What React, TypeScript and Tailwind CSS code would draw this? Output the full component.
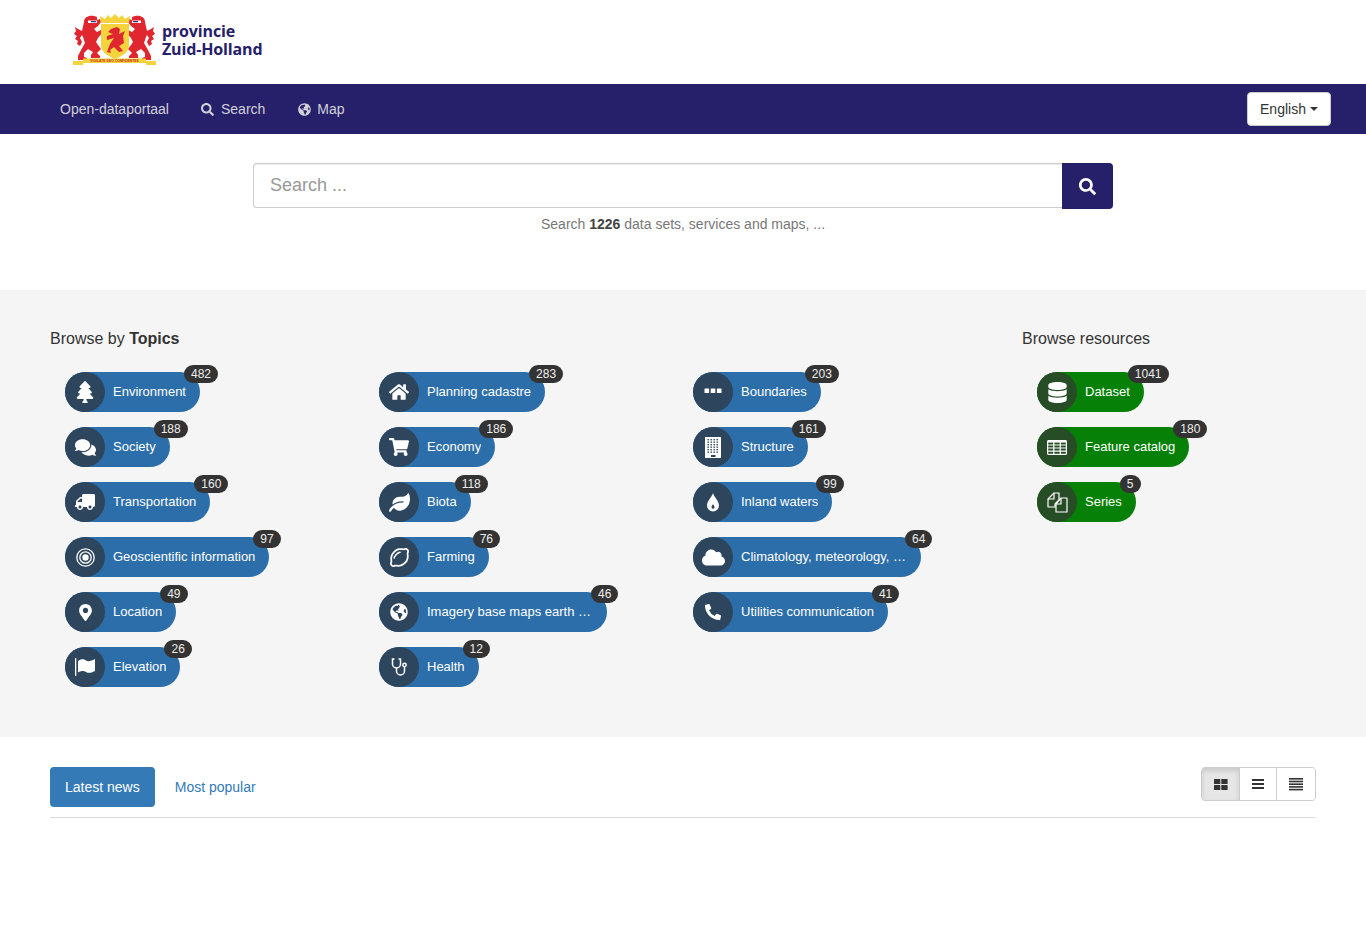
import React from "react";
import {
  FaTree, FaHome, FaComments, FaShoppingCart, FaTruck, FaLeaf, FaRegLemon, FaCloud, FaMapMarkerAlt,
  FaGlobeAmericas, FaPhoneAlt, FaDatabase, FaSearch,
} from "react-icons/fa";

const Dots = () => (
  <svg width="18" height="6" viewBox="0 0 18 6" fill="white" className="-mt-[2px]"><rect x="0.5" y="0.5" width="4.6" height="4.6" rx="0.5" /><rect x="6.7" y="0.5" width="4.6" height="4.6" rx="0.5" /><rect x="12.9" y="0.5" width="4.6" height="4.6" rx="0.5" /></svg>
);
const Building = () => (
  <svg width="16" height="21" viewBox="0 0 16 21">
    <rect width="16" height="21" fill="white" />
    {[2, 5, 8, 11].map((x) => [2, 4.5, 7, 9.5, 12, 14.5].map((y) => <rect key={x + "-" + y} x={x + 0.5} y={y} width="1.4" height="1.4" fill="#2d465e" />))}
    <rect x="6" y="18" width="4.5" height="2" fill="#2d465e" />
  </svg>
);
const Drop = () => (
  <svg width="14" height="19" viewBox="0 0 14 19">
    <path d="M7 0C8 4 13 8 13 12.5A6 6 0 0 1 1 12.5C1 8 6 4 7 0Z" fill="white" />
    <path d="M7 11C7.4 12 8.5 13 8.5 14.2A1.5 1.5 0 0 1 5.5 14.2C5.5 13 6.6 12 7 11Z" fill="#2d465e" />
  </svg>
);
const Target = () => (
  <svg width="19" height="19" viewBox="0 0 19 19" fill="none" stroke="white">
    <circle cx="9.5" cy="9.5" r="8.7" strokeWidth="1.3" />
    <circle cx="9.5" cy="9.5" r="5.7" strokeWidth="1.3" />
    <circle cx="9.5" cy="9.5" r="3.2" fill="white" stroke="none" />
  </svg>
);
const Grid = () => (
  <svg width="20" height="15" viewBox="0 0 20 15" fill="none" stroke="white" strokeWidth="1.2">
    <rect x="0.6" y="0.6" width="18.8" height="13.8" rx="1" />
    <path d="M0.6 5H19.4M0.6 8H19.4M0.6 11.2H19.4M6.8 1V14.4M13.2 1V14.4" />
    <path d="M0.6 1.6H19.4" strokeWidth="2" />
  </svg>
);
const Files = () => (
  <svg width="21" height="21" viewBox="0 0 21 21" fill="none" stroke="white" strokeWidth="1.2" strokeLinejoin="round">
    <path d="M7 1H12V8L8 12V15H1V7Z" />
    <path d="M1 7H7V1" />
    <path d="M9 12L14 6H20V20H9Z" fill="#264d26" />
    <path d="M9 12H14V6" />
  </svg>
);
const Flag = () => (
  <svg width="20" height="18" viewBox="0 0 20 18" fill="white">
    <rect x="0" y="0" width="1.3" height="18" />
    <path d="M3 3C6 0.5 9 1 11 2.5C13.5 3.8 16 3 20 1V13C16 15 13.5 15.5 11 14C9 12.5 6 12.5 3 14.5Z" />
  </svg>
);
const Stetho = () => (
  <svg width="17" height="18" viewBox="0 0 17 18" fill="none" stroke="white" strokeWidth="1.5">
    <path d="M3.5 1H1.5V6A4 4 0 0 0 9.5 6V1H7.5" />
    <path d="M5.5 10V13A4 4 0 0 0 13.5 13V9" />
    <circle cx="13.5" cy="7" r="1.7" />
  </svg>
);

type P = { icon: React.ReactNode; label: string; n: number };
const col1: P[] = [
  { icon: <FaTree size={22} color="white" />, label: "Environment", n: 482 },
  { icon: <FaComments size={21} color="white" />, label: "Society", n: 188 },
  { icon: <FaTruck size={20} color="white" className="-scale-x-100" />, label: "Transportation", n: 160 },
  { icon: <Target />, label: "Geoscientific information", n: 97 },
  { icon: <FaMapMarkerAlt size={17} color="white" />, label: "Location", n: 49 },
  { icon: <Flag />, label: "Elevation", n: 26 },
];
const col2: P[] = [
  { icon: <FaHome size={20} color="white" />, label: "Planning cadastre", n: 283 },
  { icon: <FaShoppingCart size={20} color="white" />, label: "Economy", n: 186 },
  { icon: <FaLeaf size={21} color="white" />, label: "Biota", n: 118 },
  { icon: <FaRegLemon size={19} color="white" />, label: "Farming", n: 76 },
  { icon: <FaGlobeAmericas size={18} color="white" />, label: "Imagery base maps earth cover", n: 46 },
  { icon: <Stetho />, label: "Health", n: 12 },
];
const col3: P[] = [
  { icon: <Dots />, label: "Boundaries", n: 203 },
  { icon: <Building />, label: "Structure", n: 161 },
  { icon: <Drop />, label: "Inland waters", n: 99 },
  { icon: <FaCloud size={23} color="white" />, label: "Climatology, meteorology, atmosphere", n: 64 },
  { icon: <FaPhoneAlt size={16} color="white" />, label: "Utilities communication", n: 41 },
];
const res: P[] = [
  { icon: <FaDatabase size={21} color="white" />, label: "Dataset", n: 1041 },
  { icon: <Grid />, label: "Feature catalog", n: 180 },
  { icon: <Files />, label: "Series", n: 5 },
];

function Pill({ p, green }: { p: P; green?: boolean }) {
  return (
    <div className="mb-[15px] flex h-10">
      <div className={`relative flex h-10 max-w-[228px] items-center rounded-[20px] pl-12 pr-[14px] text-[13px] text-white ${green ? "bg-[#068006]" : "bg-[#2c6ea9]"}`}>
        <span className={`absolute left-0 top-0 flex h-10 w-10 items-center justify-center rounded-full ${green ? "bg-[#264d26]" : "bg-[#2d465e]"}`}>{p.icon}</span>
        <span className="truncate">{p.label}</span>
        <span className="absolute left-[calc(100%-16px)] -top-[7px] h-[18px] rounded-[9px] bg-[#333333] px-[7px] text-[12px] leading-[18px] text-[#eeeeee]">{p.n}</span>
      </div>
    </div>
  );
}

const lion = "M14 14C14 9 19 7 24 8L27 9L27 12L30 11L31 14L28 18L24 21L27 24L31 22L32 25L28 30L26 34L28 37L31 41L27 45L30 48L30 50L21 50L21 47L23 44L18 41L14 45L14 49L17 50L17 52L8 52L8 48L11 42L15 35L13 29L12 27L10 30L12 34L10 38L7 36L8 33L5 31L7 28L4 26L6 23L5 19L8 21L12 23Z";

const Logo = () => (
  <svg width="90" height="60" viewBox="0 0 90 60" className="block">
    <path fill="#e0262e" d={lion} />
    <path fill="#e0262e" transform="translate(89 0) scale(-1 1)" d={lion} />
    <path fill="white" d="M18 12.5H27V15H18ZM62 12.5H71V15H62Z" />
    <path fill="#2b3a8c" d="M21 13H26V14.3H21ZM63 13H68V14.3H63Z" />
    <path fill="#f4d33c" d="M31 16H59V37C59 45 50 49 45 51C40 49 31 45 31 37Z" />
    <path fill="#f4d33c" d="M31 15L30 8L35 11L38 7L41 10L45 6L49 10L52 7L55 11L60 8L59 15Z" />
    <path fill="#e0262e" d="M41 21L47 19L50 21L49 26L55 23L53 28L54 35L49 38L53 43L49 44L44 39L40 42L41 45L37 44L40 36L44 30L37 32L37 28L43 26L38 24Z" />
    <path fill="#f4d33c" d="M3 53H13V50.5H76V53H86V57H76V55H13V57H3Z" />
    <text x="44.5" y="54.2" textAnchor="middle" fontSize="3.2" fontWeight="700" fill="#c8281e" fontFamily="'Liberation Sans',sans-serif" letterSpacing="0.1">VIGILATE DEO CONFIDENTES</text>
  </svg>
);

export default function App() {
  return (
    <div className="min-h-[932px] bg-white font-['Liberation_Sans',Arial,sans-serif] text-[14px] text-[#333333]">
      <header className="flex h-[84px] items-start pl-[70px] pt-[8px]">
        <Logo />
        <div className="ml-[2px] mt-[14px] font-['Open_Sans',sans-serif] text-[16px] font-bold leading-[18px] tracking-[-0.15px] text-[#26206a]">
          <div>provincie</div>
          <div>Zuid-Holland</div>
        </div>
      </header>

      <nav className="flex h-[50px] items-center justify-between bg-[#26206a] pl-[60px] pr-[35px] text-[#d0d0d8]">
        <div className="flex items-center">
          <span>Open-dataportaal</span>
          <span className="ml-8 flex items-center"><FaSearch size={13} className="mr-[7px]" />Search</span>
          <span className="ml-[33px] flex items-center"><FaGlobeAmericas size={13} className="mr-[6px]" />Map</span>
        </div>
        <button className="flex h-[34px] w-[84px] items-center justify-center rounded border border-[#cccccc] bg-white text-[14px] text-[#333333]">
          English
          <span className="ml-1 h-0 w-0 border-x-4 border-t-4 border-x-transparent border-t-[#333333]" />
        </button>
      </nav>

      <section className="h-[156px] pt-[29px]">
        <div className="ml-[253px] flex w-[860px] items-start">
          <div className="flex h-[45px] flex-1 items-center rounded-l border border-r-0 border-[#cccccc] bg-white px-4 text-[18px] text-[#999999] shadow-[inset_0_1px_1px_rgba(0,0,0,0.075)]">Search ...</div>
          <button className="flex h-[46px] w-[51px] items-center justify-center rounded-r bg-[#26206a]"><FaSearch size={17} color="white" /></button>
        </div>
        <p className="mt-[5px] text-center leading-5 text-[#777777]">Search <b className="text-[#444444]">1226</b> data sets, services and maps, ...</p>
      </section>

      <section className="flex h-[447px] bg-[#f5f5f5] px-[50px] pt-[40px]">
        <div className="w-[942px] shrink-0">
          <h2 className="mb-[24px] text-[16px] leading-[18px]">Browse by <b>Topics</b></h2>
          <div className="grid grid-cols-[314px_314px_314px]">
            {[col1, col2, col3].map((c, i) => (
              <div key={i} className="pl-[15px]">{c.map((p) => <Pill key={p.label} p={p} />)}</div>
            ))}
          </div>
        </div>
        <div className="ml-[30px] flex-1">
          <h2 className="mb-[24px] text-[16px] leading-[18px]">Browse resources</h2>
          <div className="pl-[15px]">{res.map((p) => <Pill key={p.label} p={p} green />)}</div>
        </div>
      </section>

      <section className="px-[50px] pt-[30px]">
        <div className="flex items-start justify-between border-b border-[#dddddd] pb-[10px]">
          <div className="flex">
            <span className="flex h-10 items-center rounded bg-[#337ab7] px-[15px] text-white">Latest news</span>
            <span className="ml-[5px] flex h-10 items-center px-[15px] text-[#337ab7]">Most popular</span>
          </div>
          <div className="flex h-[34px] w-[115px] overflow-hidden rounded border border-[#cccccc]">
            <span className="flex w-[37px] items-center justify-center bg-[#e6e6e6] shadow-[inset_0_3px_5px_rgba(0,0,0,0.125)]">
              <svg width="14" height="11" viewBox="0 0 14 11" fill="#333"><rect width="6.3" height="5" rx="0.6" /><rect x="7.3" width="6.3" height="5" rx="0.6" /><rect y="6" width="6.3" height="5" rx="0.6" /><rect x="7.3" y="6" width="6.3" height="5" rx="0.6" /></svg>
            </span>
            <span className="flex w-[37px] items-center justify-center border-l border-[#cccccc] bg-white">
              <svg width="12" height="11" viewBox="0 0 12 11" fill="#333"><rect width="12" height="2" /><rect y="4" width="12" height="2" /><rect y="8" width="12" height="2" /></svg>
            </span>
            <span className="flex flex-1 items-center justify-center border-l border-[#cccccc] bg-white">
              <svg width="14" height="13" viewBox="0 0 14 13" fill="#333"><rect width="14" height="1.6" /><rect y="2.7" width="14" height="1.6" /><rect y="5.4" width="14" height="1.6" /><rect y="8.1" width="14" height="1.6" /><rect y="10.8" width="14" height="1.6" /></svg>
            </span>
          </div>
        </div>
      </section>
    </div>
  );
}
